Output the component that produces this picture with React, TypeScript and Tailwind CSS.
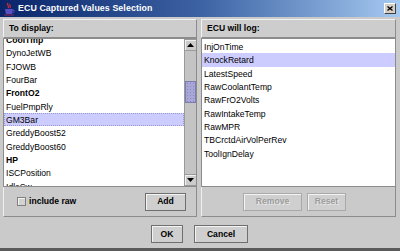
import React from "react";

type Item = { name: string; bold?: boolean; selected?: boolean; focus?: boolean };

const displayItems: Item[] = [
  { name: "CoolTmp", bold: true },
  { name: "DynoJetWB" },
  { name: "FJOWB" },
  { name: "FourBar" },
  { name: "FrontO2", bold: true },
  { name: "FuelPmpRly" },
  { name: "GM3Bar", selected: true, focus: true },
  { name: "GreddyBoost52" },
  { name: "GreddyBoost60" },
  { name: "HP", bold: true },
  { name: "ISCPosition" },
  { name: "IdleSw" },
];

const logItems: Item[] = [
  { name: "InjOnTime" },
  { name: "KnockRetard", selected: true },
  { name: "LatestSpeed" },
  { name: "RawCoolantTemp" },
  { name: "RawFrO2Volts" },
  { name: "RawIntakeTemp" },
  { name: "RawMPR" },
  { name: "TBCrctdAirVolPerRev" },
  { name: "ToolIgnDelay" },
];

function Row({ item }: { item: Item }) {
  return (
    <div
      className={`h-[13.33px] leading-[13px] pl-[1px] whitespace-nowrap ${item.bold ? "font-bold" : ""} ${
        item.selected ? "bg-[#ccccff]" : ""
      } ${item.focus ? "border border-dotted border-[#9999cc]" : "border border-transparent"}`}
    >
      {item.name}
    </div>
  );
}

function Btn({ label, disabled, w }: { label: string; disabled?: boolean; w: string }) {
  return (
    <div
      className={`${w} h-[18px] flex items-center justify-center font-bold border ${
        disabled
          ? "border-[#a9a9a9] text-[#9c9c9c] [text-shadow:1px_1px_0_#e8e8e8]"
          : "border-[#6f6f6f] text-black"
      } bg-[#cfcfcf] shadow-[inset_1px_1px_0_#f4f4f4]`}
    >
      {label}
    </div>
  );
}

function Arrow({ up }: { up?: boolean }) {
  return (
    <div className="h-[12px] flex items-center justify-center bg-[#cccccc] border-b border-t border-[#9a9a9a] shadow-[inset_1px_1px_0_#f0f0f0]">
      <svg width="7" height="4" viewBox="0 0 7 4">
        {up ? <path d="M0 4 L3.5 0 L7 4 Z" fill="#000" /> : <path d="M0 0 L3.5 4 L7 0 Z" fill="#000" />}
      </svg>
    </div>
  );
}

export default function App() {
  return (
    <div className="w-[400px] h-[251px] bg-[#cacaca] flex flex-col border-b-[3px] border-b-[#5a5a5a] text-[8.6px] text-black font-['Liberation_Sans',Arial,sans-serif] overflow-hidden">
      {/* title bar */}
      <div className="h-[17px] shrink-0 flex items-center bg-gradient-to-r from-[#0a246a] via-[#3d62a4] to-[#a6caf0] pl-[3px] pr-[4px]">
        <svg width="12" height="14" viewBox="0 0 12 14" className="shrink-0">
          <path d="M5 1 C3 3 7 4 5 6 M7 2 C6 3.5 8 4 7 6" stroke="#d03030" strokeWidth="1.2" fill="none" />
          <path d="M2 7 H10 L9 12 H3 Z" fill="#5a4fc0" />
          <path d="M10 8 C12 8 12 10 9.5 10.5" stroke="#5a4fc0" strokeWidth="1" fill="none" />
          <rect x="1" y="12.5" width="10" height="1" fill="#8a2a5a" />
        </svg>
        <span className="ml-[3px] text-white font-bold text-[8.8px] tracking-[0.1px]">ECU Captured Values Selection</span>
        <div className="ml-auto w-[12px] h-[11px] bg-[#d4d0c8] border border-t-white border-l-white border-r-[#404040] border-b-[#404040] flex items-center justify-center">
          <svg width="6" height="5" viewBox="0 0 6 5">
            <path d="M0.5 0.5 L5.5 4.5 M5.5 0.5 L0.5 4.5" stroke="#000" strokeWidth="1.3" />
          </svg>
        </div>
      </div>

      {/* panels */}
      <div className="flex gap-[4px] pl-[3px] pr-[4px] pt-[2px]">
        {/* left */}
        <div className="w-[194px] h-[198px] flex flex-col">
          <div className="h-[19px] shrink-0 flex items-center pl-[5px] font-bold border border-t-[#f2f2f2] border-l-[#f2f2f2] border-r-[#8c8c8c] border-b-[#8c8c8c] bg-[#cdcdcd]">
            To display:
          </div>
          <div className="h-[149px] shrink-0 flex bg-white border border-[#8c8c8c]">
            <div className="flex-1 overflow-hidden">
              <div className="-mt-[6px]">
                {displayItems.map((it) => (
                  <Row key={it.name} item={it} />
                ))}
              </div>
            </div>
            <div className="w-[12px] flex flex-col bg-[#c4c4c4] border-l border-[#9a9a9a]">
              <Arrow up />
              <div className="flex-1 flex flex-col">
                <div className="h-[30px] shrink-0" />
                <div className="h-[22px] shrink-0 bg-[#a8a8d8] border border-[#7c7cb0] bg-[radial-gradient(#8a8ac0_0.6px,transparent_0.7px)] bg-[length:3px_3px]" />
              </div>
              <Arrow />
            </div>
          </div>
          <div className="flex-1 flex items-center justify-between pl-[13px] pr-[10px] border border-t-0 border-[#efefef] border-r-[#8c8c8c] border-b-[#8c8c8c]">
            <div className="flex items-center gap-[3px] font-bold">
              <div className="w-[9px] h-[9px] border border-[#808080] bg-[#d2d2d2] shadow-[inset_1px_1px_0_#f4f4f4]" />
              include raw
            </div>
            <Btn label="Add" w="w-[41px]" />
          </div>
        </div>

        {/* right */}
        <div className="w-[195px] h-[198px] flex flex-col">
          <div className="h-[19px] shrink-0 flex items-center pl-[5px] font-bold border border-t-[#f2f2f2] border-l-[#f2f2f2] border-r-[#8c8c8c] border-b-[#8c8c8c] bg-[#cdcdcd]">
            ECU will log:
          </div>
          <div className="h-[149px] shrink-0 bg-white border border-[#8c8c8c] overflow-hidden pt-[1px]">
            {logItems.map((it) => (
              <Row key={it.name} item={it} />
            ))}
          </div>
          <div className="flex-1 flex items-center justify-center gap-[5px] pr-[8px] border border-t-0 border-[#efefef] border-r-[#8c8c8c] border-b-[#8c8c8c]">
            <Btn label="Remove" disabled w="w-[59px]" />
            <Btn label="Reset" disabled w="w-[39px]" />
          </div>
        </div>
      </div>

      {/* dialog buttons */}
      <div className="flex justify-center gap-[11px] mt-[8px] pr-[1px]">
        <Btn label="OK" w="w-[32px]" />
        <Btn label="Cancel" w="w-[54px]" />
      </div>
    </div>
  );
}
